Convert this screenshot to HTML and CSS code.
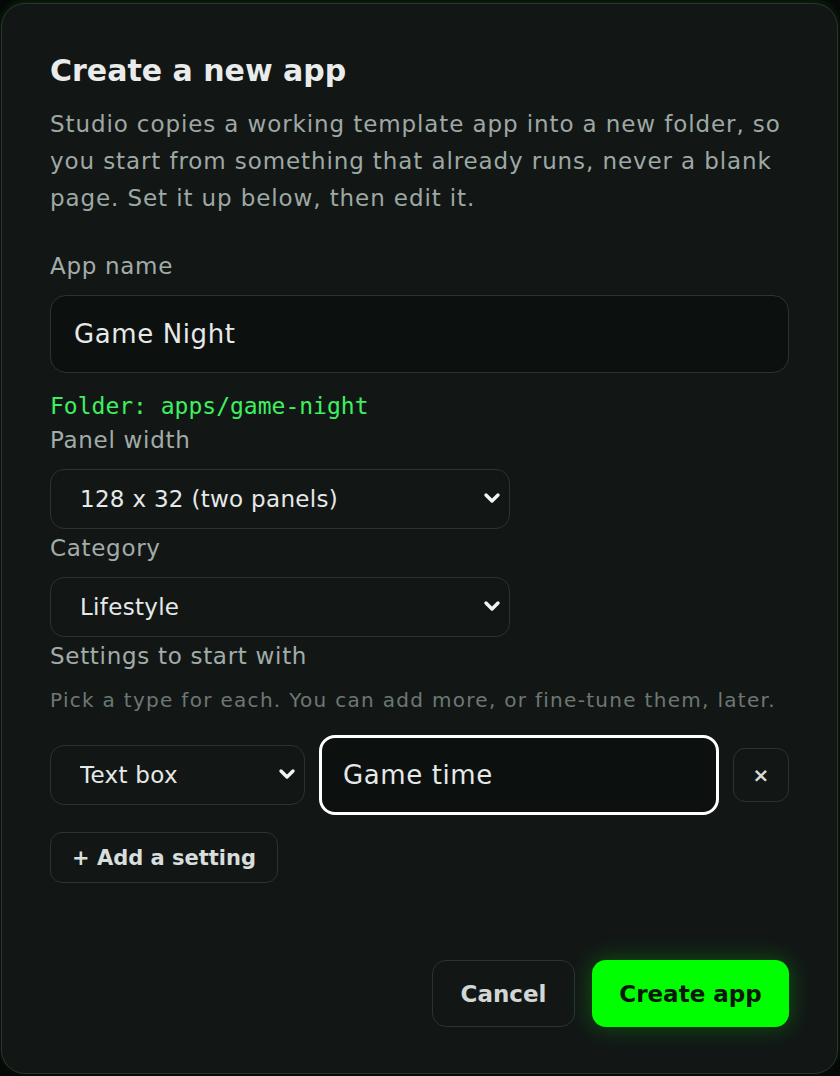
FILE: index.html
```html
<!DOCTYPE html>
<html lang="en">
<head>
    <meta charset="UTF-8">
    <meta name="viewport" content="width=device-width, initial-scale=1.0">
    <title>Create a new app</title>
    <link rel="stylesheet" href="styles.css">
</head>
<body>

<div class="dialog">
    <h1 class="dialog-title">Create a new app</h1>
    <p class="dialog-desc">Studio copies a working template app into a new folder, so you start from something that already runs, never a blank page. Set it up below, then edit it.</p>

    <!-- Nombre de la app -->
    <label class="field-label first" for="appName">App name</label>
    <input class="text-input" type="text" id="appName" value="Game Night">
    <div class="folder-hint">Folder: apps/game-night</div>

    <!-- Ancho del panel -->
    <label class="field-label" for="panelWidth">Panel width</label>
    <div class="select-wrap wide">
        <select id="panelWidth">
            <option>128 x 32 (two panels)</option>
            <option>64 x 32 (one panel)</option>
        </select>
        <svg class="chevron" width="18" height="18" viewBox="0 0 18 18"><polyline points="3,6 9,12 15,6"/></svg>
    </div>

    <!-- Categoria -->
    <label class="field-label" for="category">Category</label>
    <div class="select-wrap wide">
        <select id="category">
            <option>Lifestyle</option>
            <option>Games</option>
        </select>
        <svg class="chevron" width="18" height="18" viewBox="0 0 18 18"><polyline points="3,6 9,12 15,6"/></svg>
    </div>

    <!-- Ajustes iniciales -->
    <div class="field-label">Settings to start with</div>
    <p class="field-help">Pick a type for each. You can add more, or fine-tune them, later.</p>

    <div class="setting-row">
        <div class="select-wrap">
            <select>
                <option>Text box</option>
                <option>Number</option>
            </select>
            <svg class="chevron" width="18" height="18" viewBox="0 0 18 18"><polyline points="3,6 9,12 15,6"/></svg>
        </div>
        <input class="text-input focused" type="text" value="Game time">
        <button class="remove-btn" type="button">&times;</button>
    </div>

    <button class="add-btn" type="button">+ Add a setting</button>

    <div class="dialog-footer">
        <button class="btn-cancel" type="button">Cancel</button>
        <button class="btn-create" type="button">Create app</button>
    </div>
</div>

</body>
</html>
```

FILE: styles.css
```css
:root {
    --bg-page: #060907;
    --bg-dialog: #121716;
    --bg-input: #0c100f;
    --borde: #2a352e;
    --texto: #e6e9e8;
    --texto-suave: #a2aca8;
    --texto-tenue: #6d7874;
    --verde: #00ff00;
    --verde-hint: #3ef060;
}

* {
    box-sizing: border-box;
}

html, body {
    height: 100%;
}

body {
    margin: 0;
    padding: 3px 2px 2px 1px;
    background-color: var(--bg-page);
    font-family: 'DejaVu Sans', 'Inter', sans-serif;
    color: var(--texto);
}

.dialog {
    height: 100%;
    display: flex;
    flex-direction: column;
    align-items: flex-start;
    padding: 49px 48px 46px 48px;
    background-color: var(--bg-dialog);
    border: 1px solid var(--borde);
    border-radius: 24px;
    box-shadow: 0 -2px 6px rgba(20, 60, 20, 0.5);
}

.dialog-title {
    margin: 0;
    font-size: 30px;
    line-height: 36px;
    font-weight: 700;
    color: #e9ecea;
}

.dialog-desc {
    margin: 17px 0 0;
    font-size: 23px;
    line-height: 37px;
    letter-spacing: 0.9px;
    color: #9ea8a4;
}

.field-label {
    display: block;
    margin: 4px 0 14px;
    font-size: 23px;
    line-height: 30px;
    letter-spacing: 0.7px;
    color: var(--texto-suave);
}

.field-label.first {
    margin-top: 34px;
}

.text-input {
    width: 100%;
    height: 78px;
    padding: 0 23px;
    background-color: var(--bg-input);
    border: 1.5px solid var(--borde);
    border-radius: 16px;
    font-family: inherit;
    font-size: 26px;
    letter-spacing: 0.6px;
    color: var(--texto);
    outline: none;
}

.text-input.focused {
    height: 80px;
    border: 3px solid #ffffff;
    padding: 0 21px;
}

.folder-hint {
    margin: 19px 0 1px;
    font-family: 'DejaVu Sans Mono', monospace;
    font-size: 23px;
    line-height: 28px;
    color: var(--verde-hint);
}

.select-wrap {
    position: relative;
}

.select-wrap.wide {
    width: 460px;
}

.select-wrap select {
    width: 100%;
    height: 60px;
    padding: 0 40px 0 29px;
    appearance: none;
    -webkit-appearance: none;
    background-color: var(--bg-dialog);
    border: 1.5px solid var(--borde);
    border-radius: 14px;
    font-family: inherit;
    font-size: 23px;
    letter-spacing: 0.3px;
    color: var(--texto);
    outline: none;
}

.chevron {
    position: absolute;
    right: 9px;
    top: 20px;
    fill: none;
    stroke: #f2f4f3;
    stroke-width: 3.4;
    stroke-linecap: round;
    stroke-linejoin: round;
    pointer-events: none;
}

.field-help {
    margin: 1px 0 0;
    font-size: 20px;
    line-height: 28px;
    letter-spacing: 1.3px;
    color: var(--texto-tenue);
}

.setting-row {
    width: 100%;
    margin-top: 21px;
    display: grid;
    grid-template-columns: 255px 1fr 56px;
    gap: 14px;
    align-items: center;
}

.remove-btn {
    width: 56px;
    height: 54px;
    padding: 0;
    background-color: var(--bg-dialog);
    border: 1.5px solid var(--borde);
    border-radius: 12px;
    font-family: inherit;
    font-size: 20px;
    font-weight: 700;
    color: #d6dbd9;
    cursor: pointer;
}

.add-btn {
    margin-top: 17px;
    height: 51px;
    padding: 0 21px;
    background-color: var(--bg-dialog);
    border: 1.5px solid var(--borde);
    border-radius: 12px;
    font-family: inherit;
    font-size: 21px;
    font-weight: 700;
    color: #d8dedb;
    cursor: pointer;
}

.dialog-footer {
    margin-top: auto;
    align-self: stretch;
    display: flex;
    justify-content: flex-end;
    gap: 17px;
}

.dialog-footer button {
    height: 67px;
    border-radius: 14px;
    font-family: inherit;
    font-size: 23px;
    font-weight: 700;
    cursor: pointer;
}

.btn-cancel {
    width: 143px;
    background-color: var(--bg-dialog);
    border: 1.5px solid var(--borde);
    color: #d2d7d5;
}

.btn-create {
    width: 197px;
    background-color: var(--verde);
    border: none;
    color: #0b170b;
    box-shadow: 0 0 22px rgba(0, 255, 0, 0.28);
}
```
